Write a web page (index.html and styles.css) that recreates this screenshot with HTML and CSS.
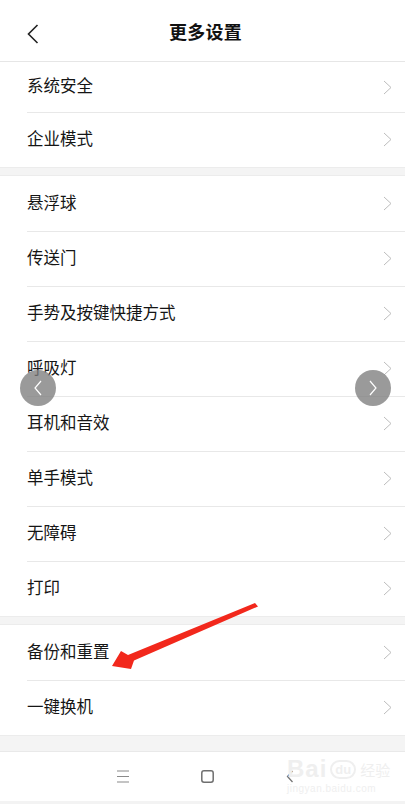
FILE: index.html
```html
<!DOCTYPE html>
<html lang="zh">
<head>
<meta charset="utf-8">
<title>更多设置</title>
<link rel="stylesheet" href="styles.css">
</head>
<body>
<div class="screen">
  <header class="topbar">
    <svg class="back" width="12" height="20" viewBox="0 0 12 20"><polyline points="10.5,1 1.5,10 10.5,19" fill="none" stroke="#222" stroke-width="1.6"/></svg>
    <h1 class="title">更多设置</h1>
  </header>

  <section class="group">
    <div class="row row-short"><span>系统安全</span><svg class="chev" width="9" height="15" viewBox="0 0 9 15"><polyline points="1,1 8,7.5 1,14" fill="none" stroke="#bdbdbd" stroke-width="1"/></svg></div>
    <div class="row"><span>企业模式</span><svg class="chev" width="9" height="15" viewBox="0 0 9 15"><polyline points="1,1 8,7.5 1,14" fill="none" stroke="#bdbdbd" stroke-width="1"/></svg></div>
  </section>
  <div class="gap"></div>
  <section class="group">
    <div class="row"><span>悬浮球</span><svg class="chev" width="9" height="15" viewBox="0 0 9 15"><polyline points="1,1 8,7.5 1,14" fill="none" stroke="#bdbdbd" stroke-width="1"/></svg></div>
    <div class="row"><span>传送门</span><svg class="chev" width="9" height="15" viewBox="0 0 9 15"><polyline points="1,1 8,7.5 1,14" fill="none" stroke="#bdbdbd" stroke-width="1"/></svg></div>
    <div class="row"><span>手势及按键快捷方式</span><svg class="chev" width="9" height="15" viewBox="0 0 9 15"><polyline points="1,1 8,7.5 1,14" fill="none" stroke="#bdbdbd" stroke-width="1"/></svg></div>
    <div class="row"><span>呼吸灯</span><svg class="chev" width="9" height="15" viewBox="0 0 9 15"><polyline points="1,1 8,7.5 1,14" fill="none" stroke="#bdbdbd" stroke-width="1"/></svg></div>
    <div class="row"><span>耳机和音效</span><svg class="chev" width="9" height="15" viewBox="0 0 9 15"><polyline points="1,1 8,7.5 1,14" fill="none" stroke="#bdbdbd" stroke-width="1"/></svg></div>
    <div class="row"><span>单手模式</span><svg class="chev" width="9" height="15" viewBox="0 0 9 15"><polyline points="1,1 8,7.5 1,14" fill="none" stroke="#bdbdbd" stroke-width="1"/></svg></div>
    <div class="row"><span>无障碍</span><svg class="chev" width="9" height="15" viewBox="0 0 9 15"><polyline points="1,1 8,7.5 1,14" fill="none" stroke="#bdbdbd" stroke-width="1"/></svg></div>
    <div class="row"><span>打印</span><svg class="chev" width="9" height="15" viewBox="0 0 9 15"><polyline points="1,1 8,7.5 1,14" fill="none" stroke="#bdbdbd" stroke-width="1"/></svg></div>
  </section>
  <div class="gap"></div>
  <section class="group">
    <div class="row"><span>备份和重置</span><svg class="chev" width="9" height="15" viewBox="0 0 9 15"><polyline points="1,1 8,7.5 1,14" fill="none" stroke="#bdbdbd" stroke-width="1"/></svg></div>
    <div class="row"><span>一键换机</span><svg class="chev" width="9" height="15" viewBox="0 0 9 15"><polyline points="1,1 8,7.5 1,14" fill="none" stroke="#bdbdbd" stroke-width="1"/></svg></div>
  </section>
  <div class="gap gap-big"></div>

  <nav class="navbar">
    <svg width="12" height="13" viewBox="0 0 12 13"><path d="M0 1h12M0 6.5h12M0 12h12" stroke="#8a8a8a" stroke-width="1.2"/></svg>
    <svg width="13" height="13" viewBox="0 0 13 13"><rect x="0.8" y="0.8" width="11.4" height="11.4" rx="2.2" fill="none" stroke="#6f6f6f" stroke-width="1.5"/></svg>
    <svg width="8" height="13" viewBox="0 0 8 13"><polyline points="6.5,1 1.5,6.5 6.5,12" fill="none" stroke="#777" stroke-width="1.3"/></svg>
    <div class="watermark">
      <div class="wm-top"><span class="wm-bai">Bai</span><span class="wm-du">du</span><span class="wm-jy">经验</span></div>
      <div class="wm-url">jingyan.baidu.com</div>
    </div>
  </nav>
  <div class="bottom-strip"></div>

  <div class="float-btn float-left"><svg width="10" height="16" viewBox="0 0 10 16"><polyline points="8,1 2,8 8,15" fill="none" stroke="#fff" stroke-width="1.2"/></svg></div>
  <div class="float-btn float-right"><svg width="10" height="16" viewBox="0 0 10 16"><polyline points="2,1 8,8 2,15" fill="none" stroke="#fff" stroke-width="1.2"/></svg></div>

  <svg class="arrow" width="405" height="804" viewBox="0 0 405 804">
    <polygon points="255,603 258,606.5 134,660.5 131,669 112,666 121,651 128,655" fill="#f2281c"/>
  </svg>
</div>
</body>
</html>
```
FILE: styles.css
```css
* { box-sizing: border-box; }
html, body { margin: 0; padding: 0; background: #fff; }
body {
  font-family: "Noto Sans CJK SC", "Noto Sans", sans-serif;
  color: #1c1c1c;
}
.screen {
  position: relative;
  width: 405px;
  height: 804px;
  overflow: hidden;
  display: flex;
  flex-direction: column;
}
.topbar {
  height: 62px;
  flex: none;
  border-bottom: 1px solid #e6e6e6;
  display: flex;
  align-items: center;
  justify-content: center;
  position: relative;
}
.back {
  position: absolute;
  left: 27px;
  top: 24px;
}
.title {
  margin: 0 0 0 6px;
  font-size: 18px;
  font-weight: 700;
  letter-spacing: 0.3px;
  color: #111;
  line-height: 1;
}
.group { display: flex; flex-direction: column; flex: none; }
.row {
  height: 55px;
  display: flex;
  align-items: center;
  justify-content: space-between;
  padding: 0 13px 0 27px;
  font-size: 16.5px;
  position: relative;
}
.row-short { height: 50px; }
.row + .row::before {
  content: "";
  position: absolute;
  left: 27px;
  right: 0;
  top: 0;
  height: 1px;
  background: #e8e8e8;
}
.row span { line-height: 1; padding-bottom: 3px; color: #151515; }
.gap {
  height: 9px;
  flex: none;
  background: #f4f4f4;
  border-top: 1px solid #ececec;
  border-bottom: 1px solid #ececec;
}
.gap-big { height: 17px; border-bottom: 1px solid #e9e9e9; }
.navbar {
  height: 49px;
  flex: none;
  display: flex;
  align-items: center;
  justify-content: center;
  gap: 72px;
  padding-left: 5px;
  position: relative;
}
.bottom-strip { flex: 1; background: #f3f3f3; }
.watermark {
  position: absolute;
  left: 287px;
  top: 2px;
  color: #efefef;
  font-family: "Liberation Sans", sans-serif;
}
.wm-top { display: flex; align-items: center; height: 30px; }
.wm-bai { font-size: 24px; font-weight: 700; letter-spacing: 1px; }
.wm-du {
  font-size: 13px;
  font-weight: 700;
  border: 2px solid #efefef;
  border-radius: 10px;
  padding: 0 3px;
  margin-left: 3px;
}
.wm-jy { font-family: "Noto Sans CJK SC", sans-serif; font-size: 15px; margin-left: 4px; }
.wm-url { font-size: 10px; letter-spacing: 0.5px; margin-top: -1px; }
.float-btn {
  position: absolute;
  top: 370px;
  width: 36px;
  height: 36px;
  border-radius: 50%;
  background: rgba(125,125,125,0.78);
  display: flex;
  align-items: center;
  justify-content: center;
}
.float-left { left: 20px; }
.float-right { left: 355px; }
.arrow { position: absolute; left: 0; top: 0; pointer-events: none; }
```
